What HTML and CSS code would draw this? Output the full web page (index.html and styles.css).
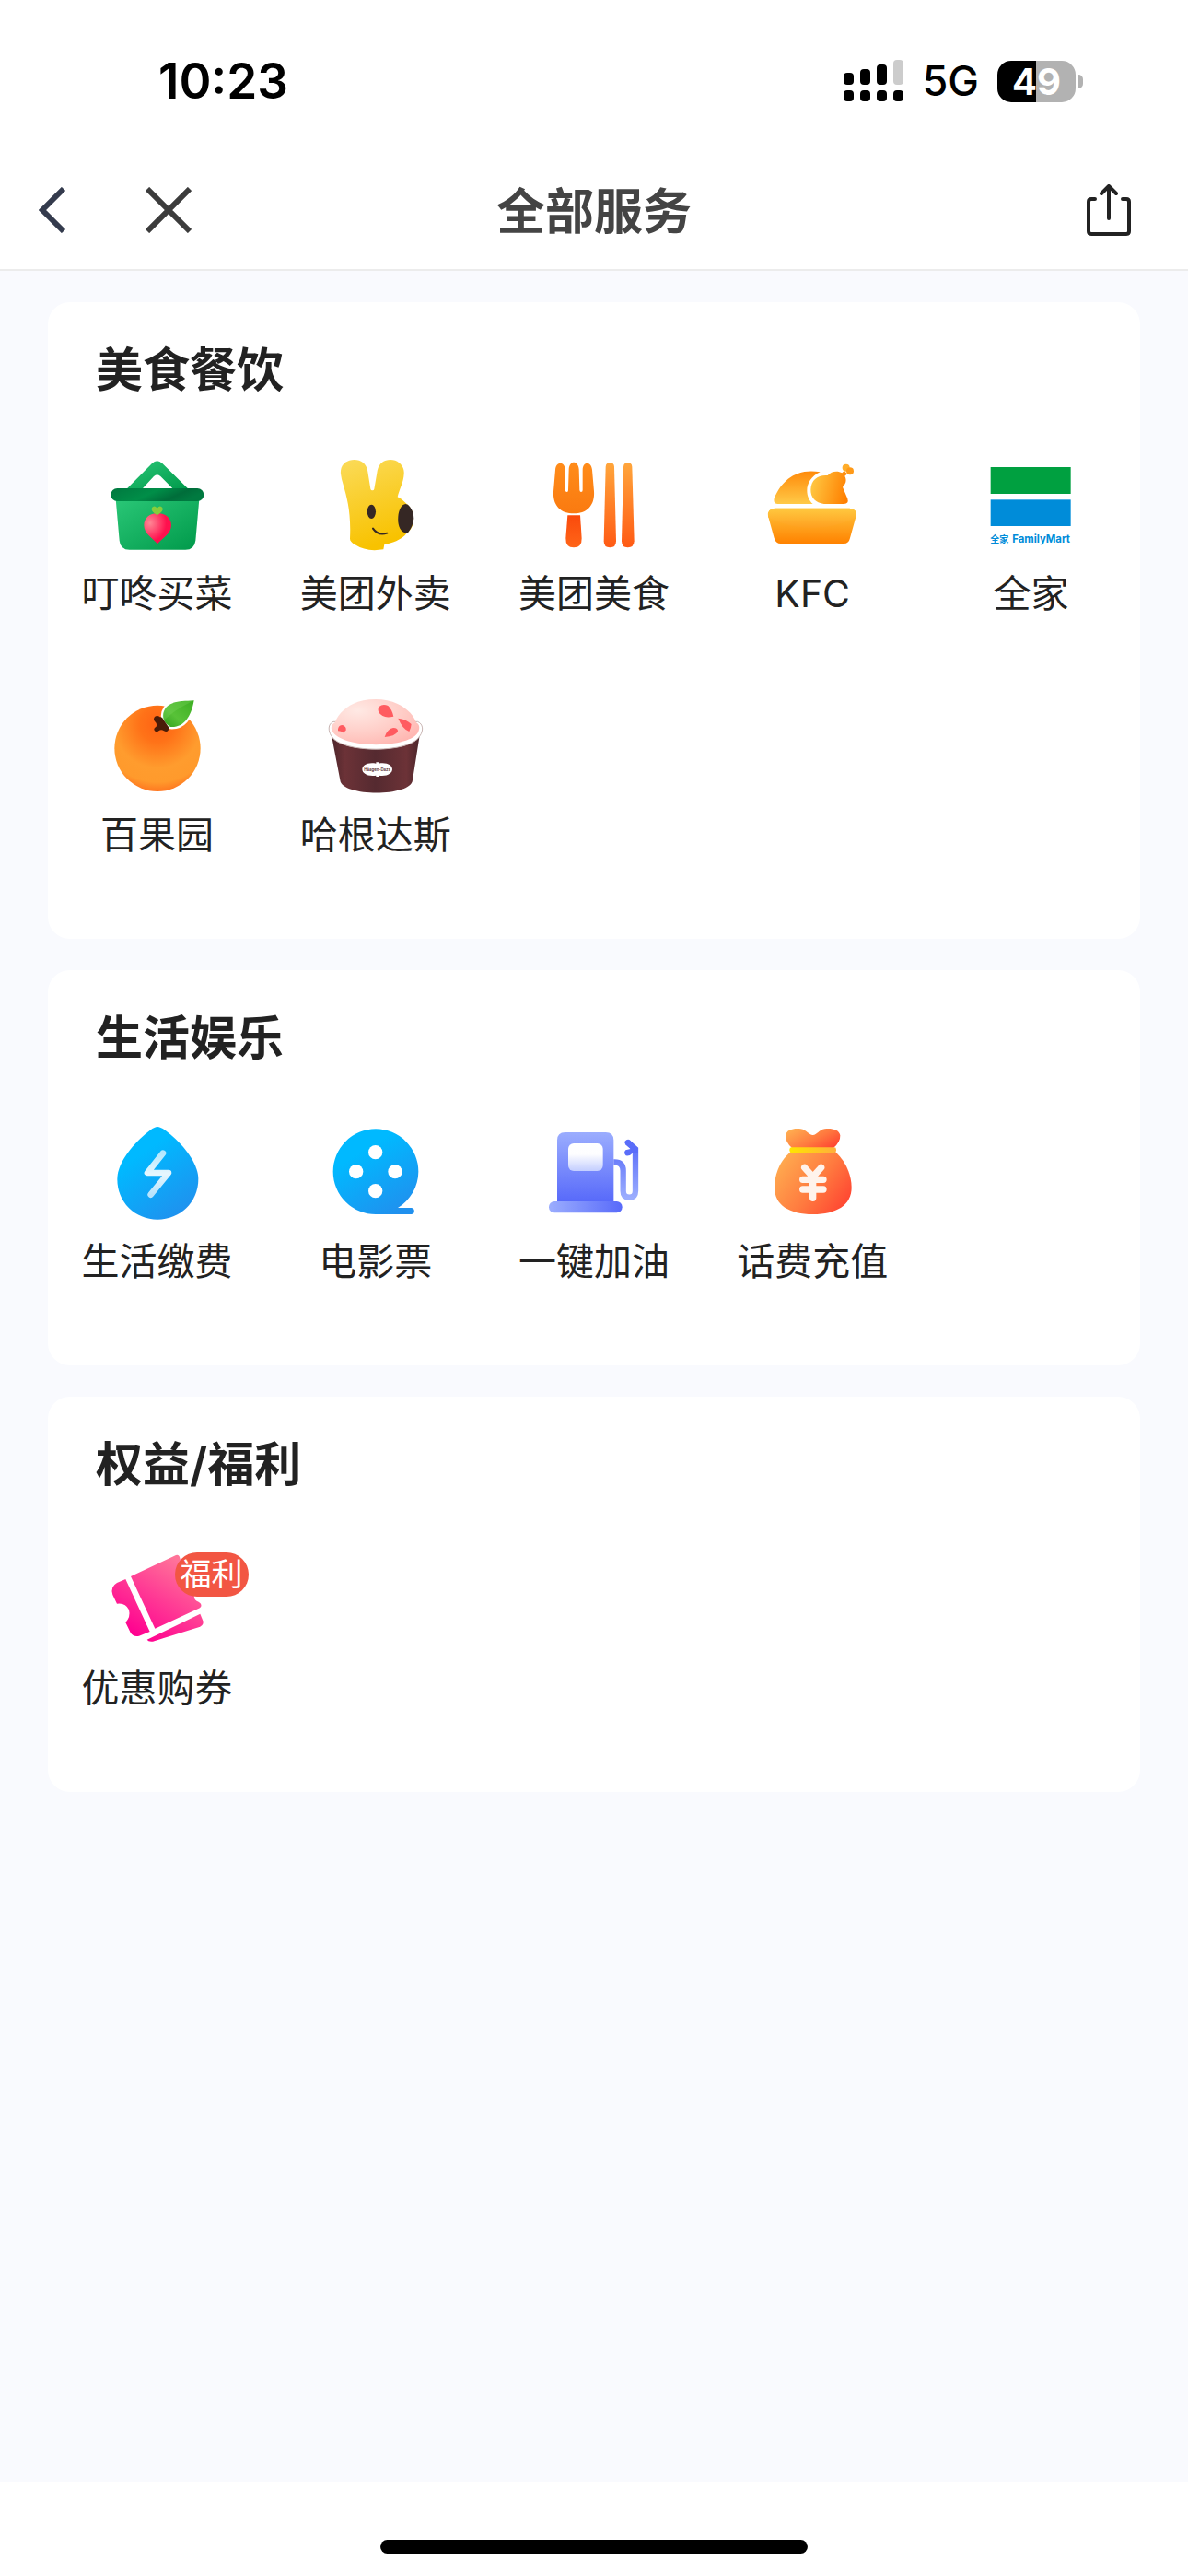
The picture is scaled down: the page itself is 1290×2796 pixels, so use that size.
FILE: index.html
```html
<!DOCTYPE html>
<html lang="zh-CN">
<head>
    <meta charset="UTF-8">
    <meta name="viewport" content="width=device-width, initial-scale=1.0">
    <title>全部服务</title>
    <link rel="stylesheet" href="styles.css">
</head>
<body>
    <header class="header">
        <div class="status-bar">
            <span class="time">10:23</span>
            <div class="status-right">
                <svg class="signal" viewBox="0 0 66 46" aria-hidden="true">
                    <rect x="0" y="14" width="11" height="13" rx="4"/>
                    <rect x="18" y="10" width="11" height="17" rx="4"/>
                    <rect x="36" y="5" width="11" height="22" rx="4"/>
                    <rect x="54" y="0" width="11" height="27" rx="4" fill="#ccc"/>
                    <rect x="0" y="33" width="11" height="12" rx="4"/>
                    <rect x="18" y="33" width="11" height="12" rx="4"/>
                    <rect x="36" y="33" width="11" height="12" rx="4"/>
                    <rect x="54" y="33" width="11" height="12" rx="4"/>
                </svg>
                <span class="network">5G</span>
                <div class="battery">
                    <span class="battery-body">49</span>
                    <span class="battery-cap"></span>
                </div>
            </div>
        </div>
        <nav class="nav-bar">
            <div class="nav-left">
                <button class="nav-btn" type="button" aria-label="返回">
                    <svg width="30" height="50" viewBox="0 0 30 50" fill="none" stroke="#343b4d" stroke-width="6"><path d="M27 2L4 25l23 23"/></svg>
                </button>
                <button class="nav-btn" type="button" aria-label="关闭">
                    <svg width="50" height="50" viewBox="0 0 50 50" fill="none" stroke="#3c3c3c" stroke-width="6"><path d="M2 2l46 46M48 2L2 48"/></svg>
                </button>
            </div>
            <h1 class="nav-title">全部服务</h1>
            <div class="nav-right">
                <button class="nav-btn" type="button" aria-label="分享">
                    <svg width="48" height="56" viewBox="0 0 48 56" fill="none" stroke="#222" stroke-width="4" stroke-linecap="round" stroke-linejoin="round"><path d="M9 16H5q-3 0-3 3v32q0 3 3 3h38q3 0 3-3V19q0-3-3-3h-4M24 37V3M16 10l8-8 8 8"/></svg>
                </button>
            </div>
        </nav>
    </header>

    <main class="content">
        <section class="card">
            <h2 class="card-title">美食餐饮</h2>
            <div class="service-grid">
                <a class="service" href="#">
                    <span class="icon">
                        <svg viewBox="212 507 360 360" aria-hidden="true">
                            <defs>
                                <linearGradient id="green" x1="0" y1="0" x2="1" y2="1"><stop offset="0" stop-color="#2ac777"/><stop offset="1" stop-color="#00994a"/></linearGradient>
                                <linearGradient id="rim" x1="0" y1="0" x2="1" y2=".3"><stop offset="0" stop-color="#00783f"/><stop offset=".5" stop-color="#008e48"/><stop offset=".8" stop-color="#006d3a"/><stop offset="1" stop-color="#007a40"/></linearGradient>
                                <radialGradient id="radish" cx=".22" cy=".32" r=".6"><stop offset="0" stop-color="#ff8795"/><stop offset="1" stop-color="#ff104e"/></radialGradient>
                            </defs>
                            <path fill="url(#green)" fill-rule="evenodd" d="M290 634L374 549Q391 532 408 549L494 634ZM342 632H443L402 591Q391 580 380 591Z"/>
                            <path fill="url(#green)" d="M256 665H528L516 800Q512 830 483 830H301Q271 830 268 800Z"/>
                            <rect x="240" y="630" width="303" height="42" rx="21" fill="url(#rim)"/>
                            <path fill="url(#radish)" d="M392 811C376 791 348 779 348 750C348 727 367 711 392 711S437 727 437 750C437 779 408 791 392 811Z"/>
                            <path fill="#86cd3c" d="M391 718Q368 704 374 693Q382 683 391 695Q400 683 408 693Q414 704 391 718Z"/>
                        </svg>
                    </span>
                    <span class="label">叮咚买菜</span>
                </a>
                <a class="service" href="#">
                    <span class="icon">
                        <svg viewBox="923 507 360 360" aria-hidden="true">
                            <defs>
                                <linearGradient id="yellow" x1="0" y1="0" x2=".3" y2="1"><stop offset="0" stop-color="#fbdb59"/><stop offset="1" stop-color="#f8c200"/></linearGradient>
                            </defs>
                            <path fill="url(#yellow)" d="M989 583C986 554 1007 537 1033 537C1058 537 1074 552 1077 576L1086 632Q1087 637 1092 637Q1097 637 1098 632L1107 580C1110 552 1127 537 1151 537C1177 537 1197 558 1195 582C1194 610 1180 633 1174 658Q1190 665 1205 682C1234 706 1233 756 1204 776C1186 799 1155 808 1131 813L1128 829Q1072 838 1036 814Q1019 804 1019 794C1023 710 1010 663 997 618Q991 600 989 583Z"/>
                            <path fill="#352724" d="M1200 681Q1208 681 1214 690Q1227 707 1227 728Q1225 752 1209 773Q1204 777 1196 774C1180 768 1174 745 1176 722C1178 700 1187 682 1200 681Z"/>
                            <ellipse cx="1089" cy="706" rx="14" ry="23" fill="#352724"/>
                            <path d="M1094 761Q1110 785 1140 776" fill="none" stroke="#352724" stroke-width="6" stroke-linecap="round"/>
                        </svg>
                    </span>
                    <span class="label">美团外卖</span>
                </a>
                <a class="service" href="#">
                    <span class="icon">
                        <svg viewBox="195 87 360 360" aria-hidden="true">
                            <defs>
                                <linearGradient id="fork" x1="0" y1="0" x2="0" y2="1"><stop offset="0" stop-color="#ff8c1a"/><stop offset="1" stop-color="#fa7a10"/></linearGradient>
                                <linearGradient id="handle" x1="0" y1="0" x2="0" y2="1"><stop offset="0" stop-color="#fa4a0c"/><stop offset="1" stop-color="#ff6518"/></linearGradient>
                                <linearGradient id="stick" x1="0" y1="0" x2="0" y2="1"><stop offset="0" stop-color="#ffa63c"/><stop offset="1" stop-color="#ff5a14"/></linearGradient>
                            </defs>
                            <path fill="url(#fork)" d="M249 150C251 121 280 121 281 150L281 216Q282 222 287 222Q291 222 291 216L293 148C295 118 323 118 326 148L328 216Q329 222 333 222Q338 222 338 216L338 150C339 121 366 122 369 150L375 220C378 265 352 292 309 292S240 265 243 220Z"/>
                            <path fill="url(#handle)" d="M289 298H330L335 372Q336 403 309 403Q282 403 283 372Z"/>
                            <path fill="url(#stick)" d="M413 140Q414 126 427 126T441 140L447 382Q447 403 427 403T407 382Z"/>
                            <path fill="url(#stick)" d="M471 140Q472 126 485 126T499 140L506 382Q505 403 485 403T465 382Z"/>
                        </svg>
                    </span>
                    <span class="label">美团美食</span>
                </a>
                <a class="service" href="#">
                    <span class="icon">
                        <svg viewBox="67 87 360 360" aria-hidden="true">
                            <defs>
                                <linearGradient id="roast" x1=".4" y1="0" x2=".4" y2="1"><stop offset="0" stop-color="#ff8a0a"/><stop offset="1" stop-color="#ffca48"/></linearGradient>
                                <linearGradient id="leg" x1="0" y1=".4" x2="1" y2=".6"><stop offset="0" stop-color="#ffc842"/><stop offset="1" stop-color="#ff7f00"/></linearGradient>
                                <linearGradient id="bowl" x1="0" y1="0" x2="0" y2="1"><stop offset="0" stop-color="#ffc53c"/><stop offset="1" stop-color="#ff8200"/></linearGradient>
                                <linearGradient id="bowlTop" x1="0" y1="0" x2="0" y2="1"><stop offset="0" stop-color="#ffc940"/><stop offset="1" stop-color="#ff9f1f"/></linearGradient>
                            </defs>
                            <path fill="url(#roast)" d="M273 157C195 143 148 184 123 242Q119 261 135 261H249C221 236 220 181 273 157Z"/>
                            <path fill="url(#leg)" d="M242 214C243 181 267 165 297 168C309 153 331 152 344 160L351 153L361 163L353 170C361 184 355 197 346 206L362 244Q367 261 350 261H285C258 258 241 240 242 214Z"/>
                            <circle cx="357" cy="143" r="12" fill="#ffad2a"/>
                            <circle cx="370" cy="154" r="12" fill="#ff9a18"/>
                            <path fill="url(#bowl)" d="M125 275H368Q394 277 390 300L370 372Q366 390 350 390H144Q128 390 123 372L103 300Q100 277 125 275Z"/>
                            <path fill="url(#bowlTop)" d="M125 275H368Q394 277 390 300L389 305Q246 373 104 305L103 300Q100 277 125 275Z"/>
                        </svg>
                    </span>
                    <span class="label">KFC</span>
                </a>
                <a class="service" href="#">
                    <span class="icon">
                        <svg viewBox="778 87 360 360" aria-hidden="true">
                            <rect x="828" y="141" width="261" height="87" fill="#00a040"/>
                            <rect x="828" y="247" width="261" height="86" fill="#008cd9"/>
                            <g class="brand-text">
                                <text x="827" y="386" font-size="30">全家</text>
                                <text x="899" y="387" font-size="34">FamilyMart</text>
                            </g>
                        </svg>
                    </span>
                    <span class="label">全家</span>
                </a>
                <a class="service" href="#">
                    <span class="icon">
                        <svg viewBox="92 63 360 360" aria-hidden="true">
                            <defs>
                                <radialGradient id="orange" cx=".5" cy=".22" r=".82"><stop offset="0" stop-color="#ff6414"/><stop offset=".25" stop-color="#ff7218"/><stop offset=".62" stop-color="#ff9c2e"/><stop offset=".82" stop-color="#ff9a2c"/><stop offset="1" stop-color="#ff6a1c"/></radialGradient>
                                <linearGradient id="leaf" x1="1" y1="0" x2="0" y2="1"><stop offset="0" stop-color="#3cae22"/><stop offset=".6" stop-color="#58c238"/><stop offset="1" stop-color="#2f9f1c"/></linearGradient>
                            </defs>
                            <circle cx="272" cy="247" r="140" fill="url(#orange)"/>
                            <path fill="url(#leaf)" stroke="#fff" stroke-width="14" paint-order="stroke" d="M391 91C382 139 362 180 314 177C292 165 282 140 299 115C320 90 358 94 391 91Z"/>
                            <path fill="#7fd75f" opacity=".3" d="M391 91C364 94 320 90 299 115C288 132 287 148 292 157C320 130 350 110 391 91Z"/>
                            <path fill="#4a1c08" d="M263 144Q272 138 280 145Q288 143 291 153L305 173Q311 179 307 188Q302 195 293 190Q284 183 276 190Q268 196 262 188Q258 182 268 176Q272 167 263 159Q257 151 263 144Z"/>
                        </svg>
                    </span>
                    <span class="label">百果园</span>
                </a>
                <a class="service" href="#">
                    <span class="icon">
                        <svg viewBox="803 63 360 360" aria-hidden="true">
                            <defs>
                                <radialGradient id="scoop" cx=".3" cy=".25" r=".9"><stop offset="0" stop-color="#ffe9e4"/><stop offset=".6" stop-color="#ffcbc5"/><stop offset="1" stop-color="#ffb3ae"/></radialGradient>
                                <linearGradient id="cup" x1="0" y1="0" x2="1" y2="0"><stop offset="0" stop-color="#4c262b"/><stop offset=".15" stop-color="#6c3237"/><stop offset=".5" stop-color="#552a30"/><stop offset=".85" stop-color="#6c3237"/><stop offset="1" stop-color="#4c262b"/></linearGradient>
                            </defs>
                            <path fill="url(#cup)" d="M839 205L867 350C872 405 1099 405 1103 350L1126 205Z"/>
                            <path fill="#fff" stroke="#c9b5b3" stroke-width="3" d="M845 160C826 168 828 190 838 206C870 264 1097 264 1127 206C1139 189 1138 168 1120 160Z"/>
                            <path fill="url(#scoop)" d="M841 190C835 178 840 168 850 163C868 118 915 87 982 87C1046 87 1098 118 1115 163Q1130 172 1122 192C1100 248 870 250 841 190Z"/>
                            <path fill="#ff5b60" d="M994 111Q1006 101 1023 108Q1036 120 1041 143Q1006 151 993 130Q988 119 994 111ZM1056 149Q1083 152 1099 168Q1098 181 1092 192Q1070 184 1056 149ZM1012 210Q1020 184 1040 180Q1056 180 1055 192Q1045 208 1012 210ZM860 184Q862 171 875 171Q888 176 886 188L877 196Q870 190 860 190Z"/>
                            <path fill="#fff" d="M984 296V292H992V296C1020 291 1037 302 1037 315S1020 339 993 335V339H984V335C956 339 939 328 939 315S956 291 984 296Z"/>
                            <text class="cup-text" x="988" y="320" font-size="13" text-anchor="middle">Häagen-Dazs</text>
                        </svg>
                    </span>
                    <span class="label">哈根达斯</span>
                </a>
            </div>
        </section>

        <section class="card">
            <h2 class="card-title">生活娱乐</h2>
            <div class="service-grid">
                <a class="service" href="#">
                    <span class="icon">
                        <svg viewBox="92 552 360 360" aria-hidden="true">
                            <defs>
                                <linearGradient id="blue" x1=".2" y1=".1" x2=".75" y2="1"><stop offset=".2" stop-color="#00b9ff"/><stop offset="1" stop-color="#2090ee"/></linearGradient>
                                <linearGradient id="bolt" x1="0" y1="0" x2="0" y2="1"><stop offset="0" stop-color="#fff" stop-opacity=".7"/><stop offset=".5" stop-color="#fff" stop-opacity=".9"/><stop offset="1" stop-color="#fff" stop-opacity=".7"/></linearGradient>
                            </defs>
                            <path fill="url(#blue)" d="M272 579Q281 579 297 590C350 630 405 693 405 750C405 825 345 881 272 881S141 825 141 750C141 693 196 630 248 590Q263 579 272 579Z"/>
                            <path d="M290 665L239 729H308L250 800" fill="none" stroke="url(#bolt)" stroke-width="20" stroke-linecap="round" stroke-linejoin="round"/>
                        </svg>
                    </span>
                    <span class="label">生活缴费</span>
                </a>
                <a class="service" href="#">
                    <span class="icon">
                        <svg viewBox="803 552 360 360" aria-hidden="true">
                            <path fill="url(#blue)" d="M983 864A139 139 0 1 1 1122 725C1122 774 1095 818 1055 843H1098A10 10 0 0 1 1098 864Z"/>
                            <g fill="#fff">
                                <circle cx="982" cy="662" r="23"/>
                                <circle cx="1046" cy="725" r="23"/>
                                <circle cx="982" cy="788" r="23"/>
                                <circle cx="919" cy="725" r="23"/>
                            </g>
                        </svg>
                    </span>
                    <span class="label">电影票</span>
                </a>
                <a class="service" href="#">
                    <span class="icon">
                        <svg viewBox="135 72 360 360" aria-hidden="true">
                            <defs>
                                <linearGradient id="pump" x1="0" y1="0" x2="0" y2="1"><stop offset="0" stop-color="#9badfe"/><stop offset="1" stop-color="#586afa"/></linearGradient>
                                <linearGradient id="base" x1="0" y1="0" x2="1" y2="0"><stop offset="0" stop-color="#9badfe"/><stop offset="1" stop-color="#586afa"/></linearGradient>
                                <linearGradient id="hose" x1="0" y1="0" x2="0" y2="1"><stop offset="0" stop-color="#5669f8"/><stop offset="1" stop-color="#9badfe"/></linearGradient>
                                <linearGradient id="screen" x1="0" y1="0" x2="0" y2="1"><stop offset="0" stop-color="#fff"/><stop offset=".4" stop-color="#fdfdff"/><stop offset="1" stop-color="#c3ceff"/></linearGradient>
                            </defs>
                            <path fill="url(#pump)" d="M195 342V143Q195 117 221 117H353Q379 117 379 143V342Z"/>
                            <rect x="231" y="153" width="113" height="90" rx="18" fill="url(#screen)"/>
                            <rect x="168" y="342" width="239" height="37" rx="18" fill="url(#base)"/>
                            <path fill="none" stroke="url(#hose)" stroke-width="19" d="M379 214H382Q410 214 410 242V308Q410 329 430 329T450 308V172L423 149"/>
                            <path fill="#5a6df9" d="M415 147Q424 136 433 143L459 169V185H440Q432 195 419 193Q410 183 418 175L434 171L418 157Q414 152 415 147Z"/>
                        </svg>
                    </span>
                    <span class="label">一键加油</span>
                </a>
                <a class="service" href="#">
                    <span class="icon">
                        <svg viewBox="847 72 360 360" aria-hidden="true">
                            <defs>
                                <linearGradient id="bag" x1="0" y1=".2" x2="1" y2=".8"><stop offset="0" stop-color="#ffad50"/><stop offset=".55" stop-color="#ff7a3f"/><stop offset="1" stop-color="#ff4331"/></linearGradient>
                                <linearGradient id="band" x1="0" y1="0" x2="1" y2="0"><stop offset="0" stop-color="#ffe600"/><stop offset="1" stop-color="#ffae3c"/></linearGradient>
                            </defs>
                            <path fill="url(#bag)" d="M961 168Q939 149 940 127C943 107 969 103 990 106C1008 109 1016 126 1029 126S1049 109 1067 106C1088 103 1115 107 1118 127Q1119 149 1096 168Z"/>
                            <path fill="url(#bag)" d="M957 180H1102C1136 211 1155 255 1155 297C1155 354 1106 384 1029 384S904 354 904 297C904 255 920 211 957 180Z"/>
                            <rect x="953" y="166" width="152" height="17" rx="7" fill="url(#band)"/>
                            <path fill="none" stroke="#fff3ec" stroke-width="22" stroke-linecap="round" stroke-linejoin="round" d="M1002 232L1029 262L1056 232M1029 262V331M996 271H1063M996 303H1063"/>
                        </svg>
                    </span>
                    <span class="label">话费充值</span>
                </a>
            </div>
        </section>

        <section class="card">
            <h2 class="card-title">权益/福利</h2>
            <div class="service-grid">
                <a class="service" href="#">
                    <span class="icon">
                        <svg viewBox="212 621 360 360" aria-hidden="true">
                            <defs>
                                <linearGradient id="pink" gradientUnits="userSpaceOnUse" x1="310" y1="910" x2="460" y2="670"><stop offset="0" stop-color="#ff0090"/><stop offset="1" stop-color="#ff7499"/></linearGradient>
                            </defs>
                            <g fill="url(#pink)">
                                <path d="M305 723L452 654Q463 651 465 664L511 786Q512 803 526 806Q541 815 530 826L384 893Z"/>
                                <path d="M260 744L288 732L367 903L332 917Q313 921 304 906L288 873Q305 855 299 832Q288 808 260 812L246 783Q237 757 260 744Z"/>
                                <path d="M358 929L531 845L541 870Q542 884 526 889L377 935Q362 937 358 929Z"/>
                            </g>
                        </svg>
                        <span class="badge">福利</span>
                    </span>
                    <span class="label">优惠购券</span>
                </a>
            </div>
        </section>
    </main>

    <footer class="home-area">
        <div class="home-bar"></div>
    </footer>
</body>
</html>
```
FILE: styles.css
```css
* {
    box-sizing: border-box;
}
body {
    font-family: Inter, "Noto Sans CJK SC", sans-serif;
    background-color: #f9fafe;
    color: #222;
    margin: 0;
    min-height: 100vh;
    display: flex;
    flex-direction: column;
}
.header {
    background-color: #fff;
    border-bottom: 2px solid #ececec;
}
.status-bar {
    display: flex;
    justify-content: space-between;
    align-items: center;
    padding: 56px 114px 44px 172px;
    line-height: 64px;
    color: #000;
}
.time {
    font-size: 53px;
    font-weight: 600;
}
.status-right {
    display: flex;
    align-items: center;
    gap: 20px;
}
.signal {
    width: 66px;
    height: 46px;
}
.network {
    font-size: 45px;
    font-weight: 500;
}
.battery {
    display: flex;
    align-items: center;
    gap: 3px;
}
.battery-body {
    width: 85px;
    height: 45px;
    border-radius: 15px;
    background: linear-gradient(to right, #000 49%, #b2b2b2 49%);
    color: #fff;
    font-size: 40px;
    font-weight: 700;
    line-height: 45px;
    text-align: center;
}
.battery-cap {
    width: 5px;
    height: 15px;
    border-radius: 0 5px 5px 0;
    background-color: #b2b2b2;
}
.nav-bar {
    display: grid;
    grid-template-columns: 1fr auto 1fr;
    align-items: center;
    height: 128px;
}
.nav-left {
    display: flex;
    gap: 86px;
    padding-left: 42px;
}
.nav-right {
    display: flex;
    justify-content: flex-end;
    padding-right: 62px;
}
.nav-btn {
    display: flex;
    padding: 0;
    border: none;
    background: none;
    cursor: pointer;
}
.nav-title {
    margin: 0;
    padding-bottom: 4px;
    font-size: 53px;
    font-weight: 600;
    color: #444;
}
.content {
    flex: 1;
    display: flex;
    flex-direction: column;
    gap: 34px;
    padding: 34px 52px;
}
.card {
    background-color: #fff;
    border-radius: 24px;
    padding: 44px 0 83px;
}
.card-title {
    margin: 0 0 57px;
    padding: 0 52px;
    font-size: 51px;
    font-weight: 600;
    line-height: 60px;
}
.service-grid {
    display: grid;
    grid-template-columns: repeat(5, 1fr);
    row-gap: 77px;
}
.service {
    display: flex;
    flex-direction: column;
    align-items: center;
    gap: 5px;
    color: inherit;
    text-decoration: none;
}
.icon {
    position: relative;
    width: 120px;
    height: 120px;
}
.icon svg {
    display: block;
    width: 100%;
    height: 100%;
}
.label {
    font-size: 41px;
    line-height: 60px;
    white-space: nowrap;
}
.badge {
    position: absolute;
    top: 8px;
    left: 79px;
    padding: 0 6px;
    border-radius: 24px;
    background-color: #f25643;
    color: #fff;
    font-size: 34px;
    line-height: 48px;
    white-space: nowrap;
}
.brand-text {
    fill: #008cd9;
    font-weight: 700;
}
.cup-text {
    fill: #552a30;
    font-weight: 600;
}
.home-area {
    background-color: #fff;
    padding: 63px 0 24px;
}
.home-bar {
    width: 36%;
    height: 15px;
    margin: 0 auto;
    border-radius: 8px;
    background-color: #000;
}
```
